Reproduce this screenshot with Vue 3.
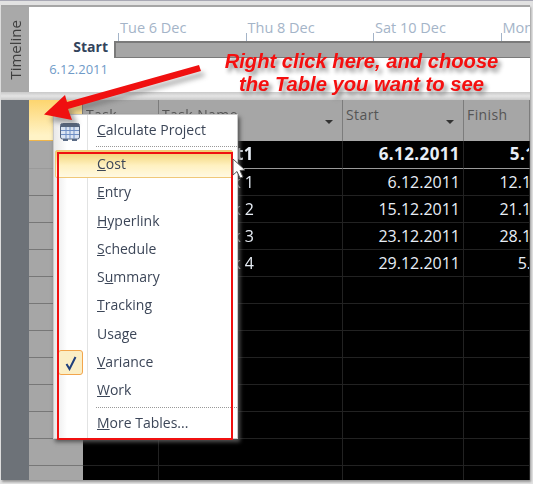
<template>
  <div class="page">
    <div class="frame">
      <div class="timeline">
        <div class="timeline-label"><span>Timeline</span></div>
        <div class="timeline-body">
          <div class="dates">
            <span v-for="d in dates" :key="d" class="date">{{ d }}</span>
          </div>
          <div class="bar-row">
            <div class="start-info">
              <b>Start</b>
              <span>6.12.2011</span>
            </div>
            <div class="bar"></div>
          </div>
        </div>
      </div>
      <div class="band"></div>

      <div class="sheet">
        <div class="gutter"></div>
        <div class="table">
          <div class="row head">
            <div class="cell num corner"></div>
            <div class="cell mode">Task</div>
            <div class="cell name">Task Name<i class="caret"></i></div>
            <div class="cell start">Start<i class="caret"></i></div>
            <div class="cell finish">Finish</div>
          </div>
          <div v-for="(r, i) in rows" :key="i" class="row body" :class="{ summary: i === 0 }">
            <div class="cell num"></div>
            <div class="cell mode"></div>
            <div class="cell name">{{ r.name }}</div>
            <div class="cell start">{{ r.start }}</div>
            <div class="cell finish"><span>{{ r.finish }}</span></div>
          </div>
        </div>
      </div>

      <div class="menu">
        <div class="menu-rail"></div>
        <div class="menu-item first">
          <svg class="table-icon" width="22" height="22" viewBox="0 0 22 22">
            <path d="M4 19h5v2H4zM13 19h5v2h-5z" fill="#5b6c86" />
            <rect x="1.500" y="3.500" width="19" height="15.500" rx="2" fill="#dbe5f3" stroke="#56667f" />
            <path d="M2 4h18v3H2z" fill="#56667f" />
            <path d="M7 7v12M11 7v12M15 7v12M2 10.500h18M2 14.500h18" stroke="#6f8fc4" fill="none" />
          </svg>
          <span><u>C</u>alculate Project</span>
        </div>
        <div class="menu-sep first-sep"></div>
        <div
          v-for="m in tables"
          :key="m.label"
          class="menu-item"
          :class="{ hot: m.label === 'Cost' }"
        >
          <span v-if="m.label === 'Variance'" class="check">
            <svg width="14" height="16" viewBox="0 0 14 16">
              <path d="M2.500 9 L5.500 14 L11.500 2" fill="none" stroke="#1f3f7c" stroke-width="2" />
            </svg>
          </span>
          <span>{{ m.before }}<u>{{ m.key }}</u>{{ m.after }}</span>
        </div>
        <div class="menu-sep last-sep"></div>
        <div class="menu-item more"><span><u>M</u>ore Tables...</span></div>
      </div>

      <div class="red-box"></div>

      <svg class="pointer" width="16" height="24" viewBox="0 0 16 24">
        <path d="M1 1 L1 17 L5 13.500 L8 20 L11 19 L8 12.500 L13 12 Z" fill="#fff" stroke="#555" />
      </svg>

      <svg class="arrow" width="533" height="140" viewBox="0 0 533 140">
        <defs>
          <filter id="soft" x="-20%" y="-20%" width="140%" height="140%">
            <feGaussianBlur stdDeviation="2.500" />
          </filter>
        </defs>
        <path d="M205 76 L72 112 L78 125 L50 121 L66 100 L70 108 L203 72 Z" fill="#555" opacity="0.5" filter="url(#soft)" />
        <path d="M201 71 L68 109 L72 120 L44 114.500 L65 95 L67 102 L199 65 Z" fill="#f01010" />
      </svg>

      <div class="note">
        <div>Right click here, and choose</div>
        <div>the Table you want to see</div>
      </div>
    </div>
  </div>
</template>

<script setup>
const dates = ["Tue 6 Dec", "Thu 8 Dec", "Sat 10 Dec", "Mon 12 Dec"];

const rows = [
  { name: "Project1", start: "6.12.2011", finish: "5.1.2012" },
  { name: "Task 1", start: "6.12.2011", finish: "12.12.2011" },
  { name: "Task 2", start: "15.12.2011", finish: "21.12.2011" },
  { name: "Task 3", start: "23.12.2011", finish: "28.12.2011" },
  { name: "Task 4", start: "29.12.2011", finish: "5.1.2012" },
  ...Array.from({ length: 8 }, () => ({ name: "", start: "", finish: "" })),
];

const tables = [
  { label: "Cost", before: "", key: "C", after: "ost" },
  { label: "Entry", before: "", key: "E", after: "ntry" },
  { label: "Hyperlink", before: "", key: "H", after: "yperlink" },
  { label: "Schedule", before: "", key: "S", after: "chedule" },
  { label: "Summary", before: "S", key: "u", after: "mmary" },
  { label: "Tracking", before: "", key: "T", after: "racking" },
  { label: "Usage", before: "Usa", key: "g", after: "e" },
  { label: "Variance", before: "", key: "V", after: "ariance" },
  { label: "Work", before: "", key: "W", after: "ork" },
];
</script>

<style>
body {
  background: #e2e2e2;
  overflow: hidden;
}
</style>

<style scoped>
.page {
  width: 533px;
  height: 484px;
  padding: 4px 3px 4px 1px;
  box-sizing: border-box;
  background: #e2e2e2;
  border-top: 1px solid #a9a9b5;
  overflow: hidden;
  font-family: "Open Sans", "Noto Sans", sans-serif;
}

.frame {
  position: relative;
  width: 529px;
  height: 475px;
  overflow: hidden;
  border-top: 2px solid #a6a6a6;
  box-sizing: border-box;
  box-shadow: 1px 2px 2px #999;
  filter: blur(0.35px);
}

.timeline {
  display: flex;
  height: 85px;
}

.timeline-label {
  flex: none;
  width: 28px;
  background: #a9a9a9;
  display: flex;
  align-items: center;
  justify-content: center;
}

.timeline-label span {
  writing-mode: vertical-rl;
  transform: rotate(180deg);
  font-size: 15px;
  color: #3f3f3f;
}

.timeline-body {
  flex: 1;
  min-width: 0;
  overflow: hidden;
  background: #fff;
  padding-top: 12px;
}

.dates {
  display: grid;
  grid-template-columns: repeat(4, 127.500px);
  padding-left: 89px;
  height: 22px;
}

.date {
  position: relative;
  font-size: 14.500px;
  white-space: nowrap;
  color: #a4b4c8;
  padding-left: 2px;
  height: 22px;
  line-height: 18px;
}

.date::before {
  content: "";
  position: absolute;
  left: 0;
  bottom: 0;
  width: 1px;
  height: 8px;
  background: #a4b4c8;
}

.bar-row {
  display: flex;
  align-items: flex-start;
}

.start-info {
  flex: none;
  width: 85px;
  display: flex;
  flex-direction: column;
  align-items: flex-end;
  padding-right: 6px;
  box-sizing: border-box;
  font-size: 14px;
  margin-top: -4px;
}

.start-info b {
  color: #33445c;
  line-height: 20px;
}

.start-info span {
  color: #6f9bc8;
  font-size: 13px;
  line-height: 24px;
}

.bar {
  flex: 1;
  height: 17px;
  box-sizing: border-box;
  background: #a6a6a6;
  border: 2px solid #7a7a7a;
  border-right: 0;
  border-bottom-width: 1px;
}

.band {
  height: 8px;
  background: linear-gradient(#c9c9c9, #e4e4e4 50%, #c9c9c9);
}

.sheet {
  display: flex;
}

.gutter {
  flex: none;
  width: 28px;
  background: #6d7278;
}

.table {
  flex: 1;
  min-width: 0;
  background: #000;
}

.row {
  display: grid;
  grid-template-columns: 54px 76px 184px 121px 66px;
  height: 27px;
  box-sizing: border-box;
}

.head {
  height: 41px;
  background: #a6a6a6;
  color: #555;
  font-size: 14px;
  letter-spacing: 0.4px;
}

.cell {
  position: relative;
  border-right: 1px solid #222;
  border-bottom: 1px solid #222;
  overflow: hidden;
  white-space: nowrap;
  box-sizing: border-box;
}

.head .cell {
  border-right: 1px solid #7c7c7c;
  border-bottom: 0;
  padding: 5px 3px;
}

.corner {
  background: linear-gradient(#fdd56f, #fff3c6 88%);
  border-bottom: 1px solid #f1b64a !important;
}

.caret {
  position: absolute;
  right: 9px;
  bottom: 17px;
  border: 4px solid transparent;
  border-top: 4px solid #333;
  border-bottom: 0;
}

.body {
  color: #e8eef6;
  font-size: 16px;
  line-height: 26px;
}

.body .num {
  background: #a6a6a6;
  border-right: 0;
  border-bottom: 1px solid #777;
}

.body .name {
  text-align: right;
  padding-right: 88px;
}

.body .start {
  text-align: right;
  padding-right: 3px;
}

.body .finish {
  padding-left: 2px;
}

.body .finish span {
  display: block;
  width: 115px;
  text-align: right;
}

.summary {
  height: 28px;
  font-size: 17px;
  font-weight: 700;
  letter-spacing: 0.4px;
}

.summary .cell {
  border-bottom: 1px solid #9a9a9a;
}

.menu {
  position: absolute;
  left: 52px;
  top: 107px;
  width: 185px;
  height: 325px;
  box-sizing: border-box;
  background: #fff;
  border: 1px solid #c9c9c9;
  box-shadow: 2px 3px 4px #555;
  padding-top: 1px;
  font-size: 14px;
  color: #3c4658;
}

.menu-rail {
  position: absolute;
  left: 0;
  top: 0;
  bottom: 0;
  width: 33px;
  background: linear-gradient(90deg, #e8e8e8, #fff 40%);
  border-right: 1px solid #e2e3e3;
}

.menu-item {
  position: relative;
  height: 28.300px;
  line-height: 28px;
  padding-left: 43px;
  white-space: nowrap;
}

.menu-item.first {
  height: 29px;
}

.menu-item.more {
  height: 30px;
  line-height: 30px;
}

.table-icon {
  position: absolute;
  left: 5px;
  top: 4px;
}

.menu-sep {
  position: relative;
  margin-left: 42px;
  border-top: 1px dotted #999;
}

.first-sep {
  margin-bottom: 3px;
  margin-top: 1px;
}

.last-sep {
  margin-top: 2px;
  margin-bottom: 0;
}

.hot {
  margin: 0 4px 0 1px;
  padding-left: 41px;
  background: linear-gradient(#f0cf6c, #fff1c0 55%, #fff9e2);
  border: 1px solid #f0c878;
  box-sizing: border-box;
  line-height: 25px;
  border-radius: 2px;
}

.check {
  position: absolute;
  left: 4px;
  top: 2px;
  width: 25px;
  height: 25px;
  box-sizing: border-box;
  background: #fbeec5;
  border: 1px solid #f2a54c;
  border-radius: 3px;
  display: flex;
  align-items: center;
  justify-content: center;
}

.red-box {
  position: absolute;
  left: 56px;
  top: 145px;
  width: 176px;
  height: 288px;
  box-sizing: border-box;
  border: 2px solid #f01010;
}

.pointer {
  position: absolute;
  left: 231px;
  top: 151px;
}

.arrow {
  position: absolute;
  left: -1px;
  top: -7px;
}

.note {
  position: absolute;
  left: 213px;
  top: 43px;
  width: 295px;
  text-align: center;
  font-family: "Liberation Sans", Arial, sans-serif;
  font-style: italic;
  font-weight: 700;
  font-size: 20.200px;
  line-height: 23px;
  color: #f50f0f;
  text-shadow: 3px 4px 4px #888;
}
</style>
